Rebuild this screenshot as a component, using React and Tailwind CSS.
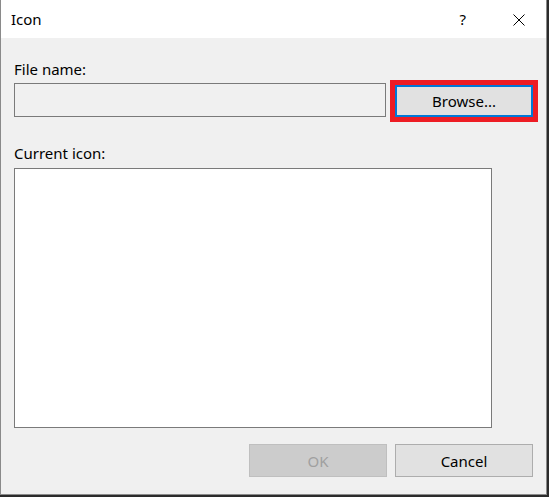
export default function App() {
  const font = { fontFamily: '"Noto Sans", "Segoe UI", sans-serif' };
  return (
    <div className="w-[549px] h-[497px] bg-[#2b2b2b] overflow-hidden" style={font}>
      <div className="w-[547px] h-[495px] border-l border-r border-b border-[#8a8a8a] bg-[#f0f0f0] flex flex-col">
        <div className="h-[38px] bg-white flex items-center shrink-0">
          <span className="ml-[10px] text-[15px] leading-[20px] text-black mt-[-1px]">Icon</span>
          <span className="ml-auto text-[15px] leading-[20px] text-black mt-[-1px] mr-[47px]">?</span>
          <svg width="12" height="12" viewBox="0 0 12 12" className="mr-[21px] mt-[1px] shrink-0">
            <path d="M0.5 0.5 L11.5 11.5 M11.5 0.5 L0.5 11.5" stroke="#000" strokeWidth="1" fill="none" />
          </svg>
        </div>
        <div className="flex flex-col pl-[13px] pr-[8px] pt-[21px]">
          <div className="text-[15px] leading-[20px] text-black">File name:</div>
          <div className="flex items-start mt-[1px] h-[42px]">
            <div className="w-[372px] h-[34px] mt-[3px] shrink-0 border border-[#7a7a7a] bg-[#f0f0f0]" />
            <div className="ml-[4px] w-[148px] h-[42px] shrink-0 border-[5px] border-[#ed1c24]">
              <div className="w-full h-full border-2 border-[#0078d7] bg-[#e1e1e1] flex items-center justify-center text-[15px] leading-[20px] text-black">
                Browse...
              </div>
            </div>
          </div>
          <div className="text-[15px] leading-[20px] text-black mt-[21px]">Current icon:</div>
          <div className="mt-[5px] w-[478px] h-[260px] shrink-0 border border-[#7a7a7a] bg-white" />
          <div className="flex justify-end gap-[8px] mt-[16px] pr-[5px]">
            <div className="w-[138px] h-[33px] shrink-0 border border-[#bfbfbf] bg-[#cccccc] flex items-center justify-center text-[15px] leading-[20px] text-[#a0a0a0]">
              OK
            </div>
            <div className="w-[138px] h-[33px] shrink-0 border border-[#adadad] bg-[#e1e1e1] flex items-center justify-center text-[15px] leading-[20px] text-black">
              Cancel
            </div>
          </div>
        </div>
      </div>
    </div>
  );
}
